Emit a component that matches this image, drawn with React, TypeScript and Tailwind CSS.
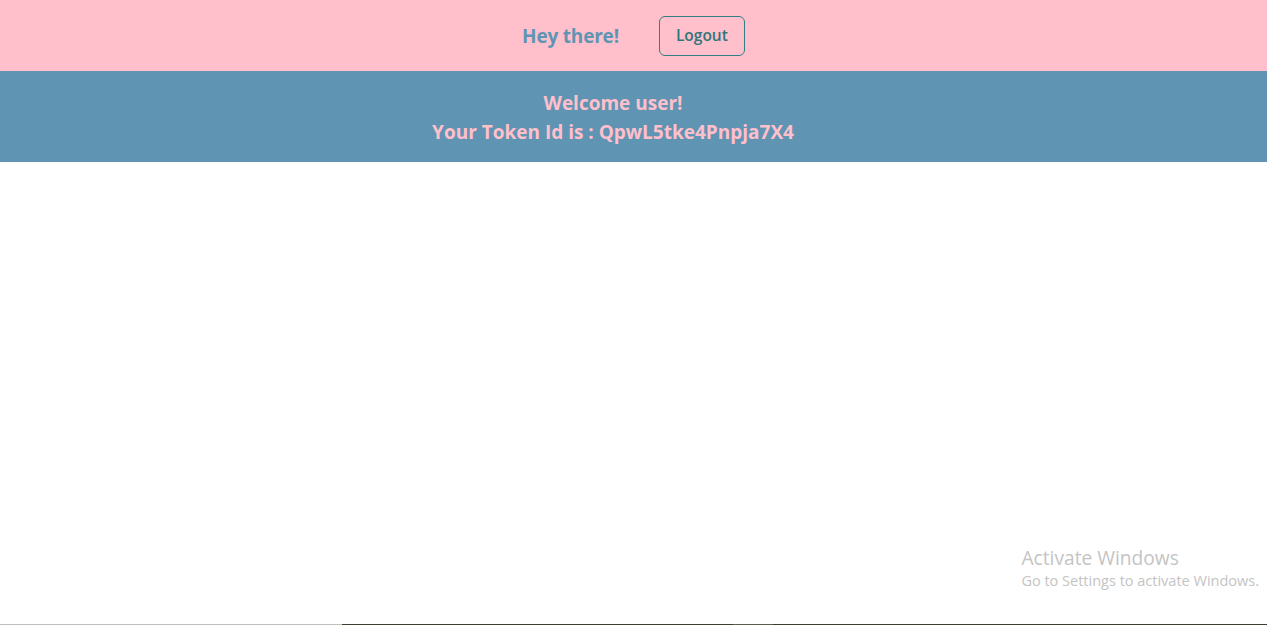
import React from "react";

export default function App() {
  return (
    <div className="w-[1267px] h-[625px] bg-white flex flex-col relative overflow-hidden" style={{ fontFamily: '"Open Sans", "Noto Sans", sans-serif' }}>
      <header className="h-[71px] bg-[#ffc0cb] flex items-center justify-center gap-[40px] pt-[1px]">
        <span className="text-[19px] font-bold text-[#5f94b3] tracking-[-0.2px]">Hey there!</span>
        <button className="w-[86px] h-[40px] border border-[#2f7f86] rounded-[6px] text-[15.5px] font-semibold text-[#2f7579] flex items-center justify-center">Logout</button>
      </header>
      <section className="h-[91px] bg-[#5f94b3] flex flex-col items-center justify-center text-[#ffc0cb] font-bold text-[19px] leading-[29px] pt-[3px] pr-[41px]">
        <div>Welcome user!</div>
        <div>Your Token Id is : QpwL5tke4Pnpja7X4</div>
      </section>
      <div className="flex-1" />
      <div className="absolute right-[8px] top-[546px] text-[#c4c4c4] leading-tight" style={{ fontFamily: '"Open Sans", sans-serif' }}>
        <div className="text-[19.2px] font-normal">Activate Windows</div>
        <div className="text-[14.5px] mt-[2px]">Go to Settings to activate Windows.</div>
      </div>
      <div className="h-[1px] flex">
        <div className="w-[342px] bg-[#c0c0c0]" />
        <div className="w-[391px] bg-[#3b3f2f]" />
        <div className="w-[40px] bg-[#5c5c52]" />
        <div className="flex-1 bg-[#3b3f2f]" />
      </div>
    </div>
  );
}
